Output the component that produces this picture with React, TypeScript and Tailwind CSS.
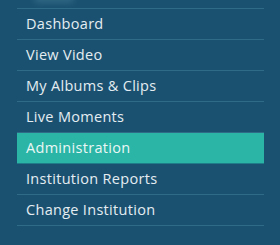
const ITEMS = [
  "Dashboard",
  "View Video",
  "My Albums & Clips",
  "Live Moments",
  "Administration",
  "Institution Reports",
  "Change Institution",
];

export default function App() {
  return (
    <div className="relative h-[245px] w-[280px] overflow-hidden bg-[#1b5170] pt-2 font-['Open_Sans',sans-serif]">
      {/* faint glow left from the avatar above */}
      <div className="absolute -top-[6px] left-[34px] h-[9px] w-[40px] rounded-full bg-[#3d7691] opacity-60 blur-[3px]" />
      <ul className="relative ml-[17px] w-[247px] border-t border-[#2f6a87]">
        {ITEMS.map((label) => {
          const active = label === "Administration";
          return (
            <li
              key={label}
              className={[
                "flex h-[31px] items-center border-b pl-[9px] text-[14.5px] tracking-[0.3px]",
                active
                  ? "border-[#1f7d8a] bg-[#2bb5a6] text-[#eaf7f5]"
                  : "border-[#2f6a87] text-[#e4edf2]",
              ].join(" ")}
            >
              {label}
            </li>
          );
        })}
      </ul>
    </div>
  );
}
